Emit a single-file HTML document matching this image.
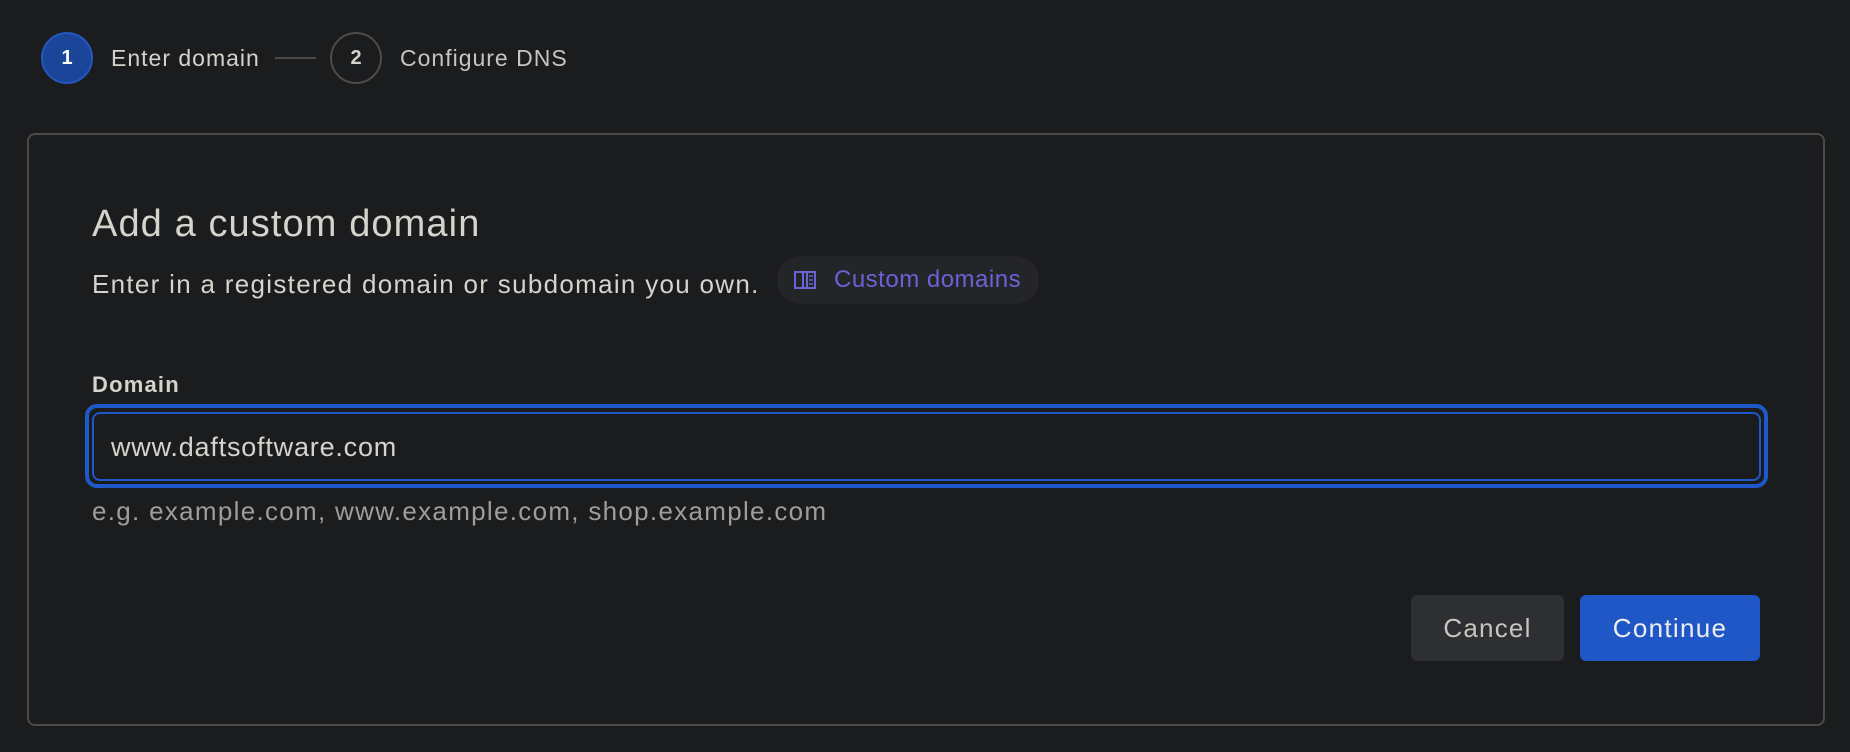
<!DOCTYPE html>
<html><head><meta charset="utf-8"><style>
*{box-sizing:border-box;margin:0;padding:0}
body{width:1850px;height:752px;background:#1b1c1e;font-family:"Liberation Sans",sans-serif;color:#d6d2cc;position:relative;overflow:hidden}
.a{position:absolute;white-space:nowrap}
</style></head><body>
<div class="a" style="left:41px;top:32px;width:52px;height:52px;border-radius:50%;background:#1a4599;border:2px solid #2458c0;color:#fff;font-weight:bold;font-size:20px;line-height:48px;text-align:center">1</div>
<div class="a" style="left:111px;top:44px;font-size:23px;letter-spacing:1px;line-height:28px;color:#d6d2cc">Enter domain</div>
<div class="a" style="left:275px;top:57px;width:41px;height:2px;background:#4a4a4a"></div>
<div class="a" style="left:330px;top:32px;width:52px;height:52px;border-radius:50%;border:2px solid #4c4c4c;color:#d6d2cc;font-weight:bold;font-size:20px;line-height:48px;text-align:center">2</div>
<div class="a" style="left:400px;top:44px;font-size:23px;letter-spacing:1px;line-height:28px;color:#c8c4be">Configure DNS</div>

<div class="a" style="left:27px;top:133px;width:1798px;height:593px;border:2px solid #4a4a4b;border-radius:8px"></div>
<div class="a" style="left:92px;top:201px;font-size:38px;letter-spacing:1.1px;line-height:46px;color:#d6d2cc">Add a custom domain</div>
<div class="a" style="left:92px;top:268px;font-size:26px;letter-spacing:1.3px;line-height:32px;color:#d6d2cc">Enter in a registered domain or subdomain you own.</div>
<div class="a" style="left:777px;top:256px;width:262px;height:48px;border-radius:24px;background:#242528"></div>
<svg class="a" style="left:794px;top:270px" width="22" height="20" viewBox="0 0 22 20" fill="none" stroke="#6b62d6" stroke-width="2"><path d="M1 2h8v16H1z M13 2h8v16h-8z M9 2h4 M9 18h4"/><path d="M15 6h4M15 10h4M15 14h4" stroke-width="1.6"/></svg>
<div class="a" style="left:834px;top:265px;font-size:24px;letter-spacing:0.5px;line-height:30px;color:#6b62d6">Custom domains</div>

<div class="a" style="left:92px;top:372px;font-size:22px;letter-spacing:1.2px;font-weight:bold;line-height:26px;color:#d6d2cc">Domain</div>
<div class="a" style="left:85px;top:404px;width:1683px;height:84px;border:4px solid #1f58c8;border-radius:12px"></div>
<div class="a" style="left:92px;top:412px;width:1669px;height:69px;border:2px solid #1f58c8;border-radius:8px"></div>
<div class="a" style="left:111px;top:431px;font-size:27px;letter-spacing:0.8px;line-height:32px;color:#d6d2cc">www.daftsoftware.com</div>
<div class="a" style="left:92px;top:495px;font-size:26px;letter-spacing:1.3px;line-height:32px;color:#a09d99">e.g. example.com, www.example.com, shop.example.com</div>

<div class="a" style="left:1411px;top:595px;width:153px;height:66px;border-radius:6px;background:#2d2f32;color:#c8c4be;font-size:26px;letter-spacing:1.2px;line-height:66px;text-align:center">Cancel</div>
<div class="a" style="left:1580px;top:595px;width:180px;height:66px;border-radius:6px;background:#1f57c6;color:#eeeeee;font-size:26px;letter-spacing:1.3px;line-height:66px;text-align:center">Continue</div>
</body></html>
